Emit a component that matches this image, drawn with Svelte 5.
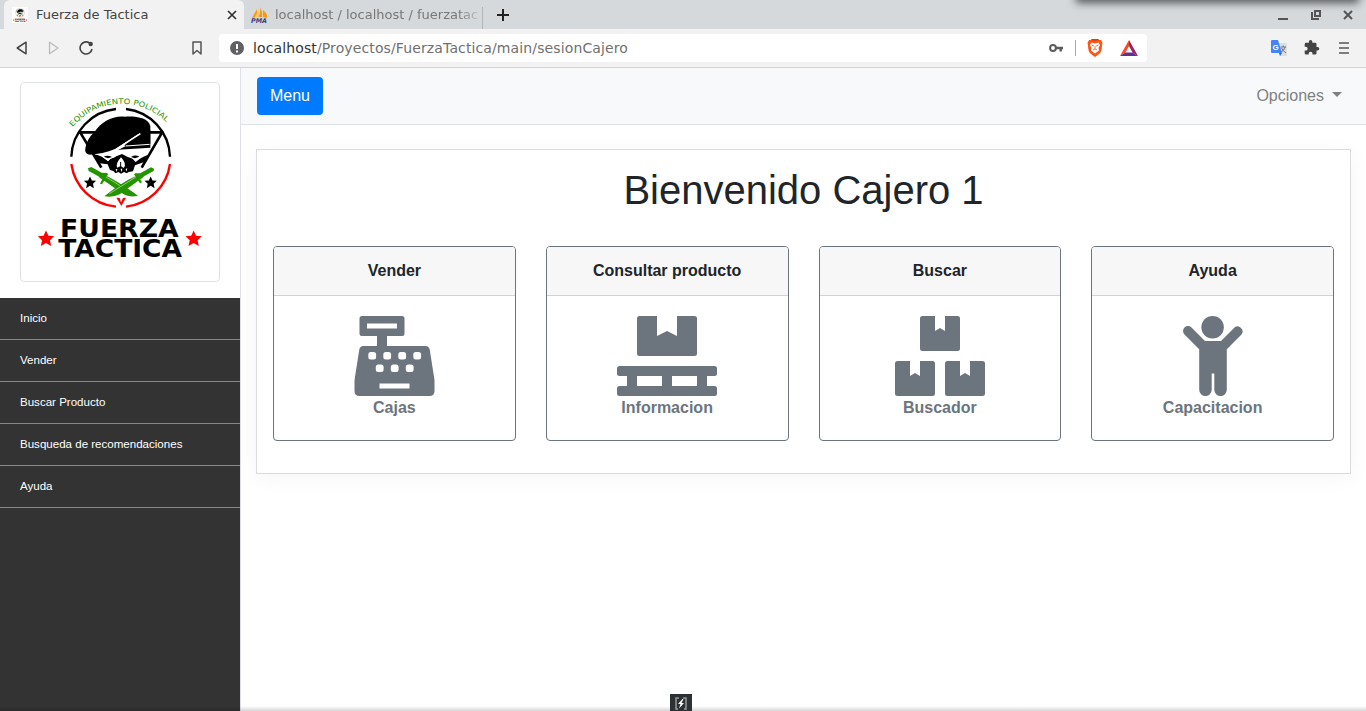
<script>
  const nav = ['Inicio', 'Vender', 'Buscar Producto', 'Busqueda de recomendaciones', 'Ayuda'];
  const cards = [
    { title: 'Vender', label: 'Cajas', icon: 'register' },
    { title: 'Consultar producto', label: 'Informacion', icon: 'pallet' },
    { title: 'Buscar', label: 'Buscador', icon: 'boxes' },
    { title: 'Ayuda', label: 'Capacitacion', icon: 'child' }
  ];
  const star = 'M0-10L3-3.6L10-3L4.8 1.9L6.3 9L0 5.2L-6.3 9L-4.8 1.9L-10-3L-3-3.6Z';
</script>

{#snippet box(x, y)}
  <path transform="translate({x} {y})" d="M2.500 0H15V15L20 12L25 15V0H37.500Q40 0 40 2.500V32.500Q40 35 37.500 35H2.500Q0 35 0 32.500V2.500Q0 0 2.500 0Z" />
{/snippet}

{#snippet logoArt()}
  <g transform="scale(.333333) translate(0 -6)">
    <path id="motto" d="M158 141A190 190 0 0 1 452 141" fill="none" />
    <text class="motto"><textPath href="#motto" textLength="316" lengthAdjust="spacingAndGlyphs">EQUIPAMIENTO POLICIAL</textPath></text>
    <g fill="none" stroke-width="7">
      <path stroke="#000" d="M154 230A149 149 0 0 1 288 87M318 87A149 149 0 0 1 450 230" />
      <path stroke="#f00" d="M154 252A149 149 0 0 0 288 380M318 380A149 149 0 0 0 450 252" />
      <path stroke="#000" stroke-width="8" d="M174 157H430M181 158L244 263M426 158L365 263" />
    </g>
    <path d="M196 205Q200 177 224 155C244 126 277 106 315 110C351 108 385 114 391 138V203L294 209L391 164L360 159L287 206C260 218 234 222 209 224Q193 223 196 205Z" />
    <path d="M362 158L391 150V192L308 198Z" />
    <path stroke="#fff" stroke-width="5" fill="none" d="M278 215L361 161" />
    <path stroke="#fff" stroke-width="3" fill="none" d="M318 198L389 193" />
    <path fill="#fff" d="M290 207L318 190L313 199L298 208Z" />
    <path d="M220 223Q246 226 264 244L271 236Q283 234 289 229L306 222L322 230L338 236L347 246Q365 229 388 224L371 247L345 256L339 274L326 276L320 280L312 276L303 281L295 276L287 280L280 273L270 270L263 253L237 250Z" />
    <path fill="#fff" d="M248 232Q264 222 280 232L270 238L264 243ZM331 232Q346 221 361 232L347 244L340 237Z" />
    <path d="M251 230Q264 224 276 231L264 235ZM333 231Q346 223 358 230L345 235Z" />
    <path fill="#fff" d="M303 232Q285 253 292 263L302 258L311 264Q322 252 303 232ZM287 267L290 276L292 267ZM302 266L304 277L307 266ZM317 267L319 275L322 265Z" />
    <path stroke="#000" stroke-width="3" d="M302 246V260" />
    <g fill="#249400">
      <path d="M204 265L214 261L245 278L261 279L257 286L281 299Q325 325 354 347Q328 353 311 343L245 297L240 294L235 289L206 273ZM257 278L265 282L246 313L240 311Z" />
      <path d="M402 266L393 262L361 280L345 280L350 287L325 299Q281 325 253 349Q279 353 299 343L361 298L367 294L372 289L401 273ZM348 279L342 283L360 310L366 307Z" />
    </g>
    <path stroke="#fff" stroke-width="1.500" fill="none" d="M258 291L300 317M348 291L268 341" />
    <path d={star} transform="translate(210 308) scale(1.85)" />
    <path d={star} transform="translate(392 308) scale(1.85)" />
    <path fill="#f00" d="M289 353L299 354L303 367L309 354L318 353L304 378Z" />
    <path fill="#f00" d={star} transform="translate(78 476) scale(2.45)" />
    <path fill="#f00" d={star} transform="translate(521 476) scale(2.45)" />
    <text class="brand" x="120" y="470" textLength="356" lengthAdjust="spacingAndGlyphs">FUERZA</text>
    <text class="brand" x="115" y="532" textLength="371" lengthAdjust="spacingAndGlyphs">TACTICA</text>
  </g>
{/snippet}

<div class="window">
  <header class="tabs">
    <div class="tab active">
      <svg class="fav" viewBox="18 8 164 182" width="16" height="16"><rect x="0" y="0" width="200" height="200" fill="#fff" />{@render logoArt()}</svg>
      <span>Fuerza de Tactica</span>
      <svg class="close" width="10" height="10" viewBox="0 0 10 10"><path d="M1 1L9 9M9 1L1 9" stroke="#333" stroke-width="1.7" /></svg>
    </div>
    <div class="tab second">
      <svg width="17" height="16" viewBox="0 0 17 16"><path fill="#f89c0e" d="M6 2L6 10L1 11ZM9 0Q12 5 11 10L7 10Q10 6 9 0ZM12 3Q17 7 16 11L12 10Z" /><path fill="#fdc471" d="M8 2V10L4 10Z" /><text x="0" y="15.500" class="pma" textLength="16" lengthAdjust="spacingAndGlyphs">PMA</text></svg>
      <span class="fade">localhost / localhost / fuerzatac</span>
    </div>
    <svg class="plus" width="12" height="12" viewBox="0 0 12 12"><path d="M6 0V12M0 6H12" stroke="#222" stroke-width="2" /></svg>
    <div class="controls">
      <svg width="10" height="12" viewBox="0 0 10 12"><path d="M0 10H10" stroke="#555" stroke-width="2" /></svg>
      <svg width="10" height="12" viewBox="0 0 10 12"><path d="M4 2H9V7H4ZM1 3V10H8" fill="none" stroke="#555" stroke-width="2" /></svg>
      <svg width="10" height="12" viewBox="0 0 10 12"><path d="M1 2L9 10M9 2L1 10" stroke="#555" stroke-width="2" /></svg>
    </div>
  </header>

  <div class="toolbar">
    <svg class="back" width="12" height="14" viewBox="0 0 12 14"><path d="M10 1.200V12.800L1.200 7Z" fill="none" stroke="#444" stroke-width="1.500" stroke-linejoin="round" /></svg>
    <svg class="forward" width="12" height="14" viewBox="0 0 12 14"><path d="M1.500 1.200V12.800L10 7Z" fill="none" stroke="#bbb" stroke-width="1.300" stroke-linejoin="round" /></svg>
    <svg class="reload" width="14" height="14" viewBox="0 0 14 14"><path d="M10.500 2A6 6 0 1 0 13 8" fill="none" stroke="#444" stroke-width="1.600" /><circle cx="11.700" cy="3" r="2.200" fill="#444" /></svg>
    <svg class="bookmark" width="10" height="14" viewBox="0 0 10 14"><path d="M1 1H9V13L5 9.500L1 13Z" fill="none" stroke="#555" stroke-width="1.500" stroke-linejoin="round" /></svg>
    <div class="address">
      <svg width="14" height="14" viewBox="0 0 14 14"><circle cx="7" cy="7" r="7" fill="#5f6165" /><path d="M7 3V8M7 9.500V11.500" stroke="#fff" stroke-width="2" /></svg>
      <span class="url"><b>localhost</b>/Proyectos/FuerzaTactica/main/sesionCajero</span>
      <svg class="key" width="14" height="9" viewBox="0 0 14 9"><circle cx="4" cy="4" r="2.900" fill="none" stroke="#5a5c60" stroke-width="2" /><path d="M7 4H14M11.700 4V7.500" stroke="#5a5c60" stroke-width="2.400" /></svg>
      <i class="divider"></i>
      <svg class="lion" width="16" height="18" viewBox="0 0 16 18"><path fill="#fb5413" d="M4 1L5 0H11L12 1L14 1L15.500 4L15 6Q15 13 12 15L8 18L4 15Q1 13 1 6L.5 4L2 1Z" /><path fill="#e23f08" d="M4 1L5 0H11L12 1L8 2Z" /><path fill="#fff" d="M4.500 3.500L8 4.500L11.500 3.500L13 6L11.500 9L12 11.500L8 14.500L4 11.500L4.500 9L3 6Z" /><path d="M4.500 6L7 7M11.500 6L9 7M8 7V10M6 11L8 10L10 11" stroke="#fb5413" stroke-width=".8" fill="none" /></svg>
      <svg class="bat" width="18" height="16" viewBox="0 0 18 16"><path fill="#ff4724" d="M9 0L0 16L5.500 12.500L9 6Z" /><path fill="#9e1f63" d="M9 0L18 16L12.500 12.500L9 6Z" /><path fill="#662d91" d="M0 16H18L12.500 12.500H5.500Z" /></svg>
    </div>
    <svg class="translate" width="16" height="16" viewBox="0 0 16 16"><path fill="#dedede" d="M7 3H15Q16 3 16 4V16H9Z" /><path fill="#4386f3" d="M1 0H7L11 13H1Q0 13 0 12V1Q0 0 1 0Z" /><path fill="#3367d6" d="M8 13H11L9 16Z" /><text x="1.500" y="9.500" class="g">G</text><path d="M9.500 7H15M12.200 5.500V7M14 7Q13 11 10 12M10.500 8Q12 11 15 13" stroke="#607988" fill="none" /></svg>
    <svg class="puzzle" width="16" height="16" viewBox="1 1 23 23"><path fill="#444" d="M20.500 11H19V7a2 2 0 0 0-2-2h-4V3.500a2.500 2.500 0 0 0-5 0V5H4a2 2 0 0 0-2 2v3.800h1.500a2.700 2.700 0 0 1 0 5.400H2V20a2 2 0 0 0 2 2h3.800v-1.500a2.700 2.700 0 0 1 5.400 0V22H17a2 2 0 0 0 2-2v-4h1.500a2.500 2.500 0 0 0 0-5Z" /></svg>
    <svg class="menu" width="10" height="12" viewBox="0 0 10 12"><path d="M0 1H10M0 6H10M0 11H10" stroke="#555" stroke-width="1.700" /></svg>
  </div>

  <div class="page">
    <aside>
      <div class="logo-wrap">
        <div class="logo"><svg width="200" height="200" viewBox="0 0 200 200">{@render logoArt()}</svg></div>
      </div>
      <nav>
        {#each nav as item}<a href="#top">{item}</a>{/each}
      </nav>
    </aside>
    <main>
      <div class="navbar">
        <button>Menu</button>
        <span class="options">Opciones</span>
      </div>
      <section class="panel">
        <h1>Bienvenido Cajero 1</h1>
        <div class="cards">
          {#each cards as card}
            <article>
              <h2>{card.title}</h2>
              <div class="body">
                {#if card.icon === 'register'}
                  <svg class="register" width="80" height="80" viewBox="-.5 0 80 80">
                    <path fill-rule="evenodd" d="M7.500 0H47.500Q50 0 50 2.500V17.500Q50 20 47.500 20H32.500V30H71Q74.500 30 75.200 33.500L79.700 62Q80 64 80 66V75Q80 80 75 80H5Q0 80 0 75V66Q0 64 .3 62L4.800 33.500Q5.500 30 9 30H22.500V20H7.500Q5 20 5 17.500V2.500Q5 0 7.500 0ZM12.500 7.500V12.500H42.500V7.500ZM25 67.500V72.500H55V67.500Z" />
                    <g fill="#fff">
                      {#each [13.8, 28.8, 43.8, 58.8] as x}<rect {x} y="36" width="7.800" height="7.500" rx="2.500" />{/each}
                      {#each [21.3, 36.3, 51.3] as x}<rect {x} y="48.500" width="7.800" height="7.500" rx="2.500" />{/each}
                    </g>
                  </svg>
                {:else if card.icon === 'pallet'}
                  <svg width="100" height="80" viewBox="0 0 100 80">
                    <path d="M22.500 0H40V20L50 15L60 20V0H77.500Q80 0 80 2.500V37.500Q80 40 77.500 40H22.500Q20 40 20 37.500V2.500Q20 0 22.500 0Z" />
                    <path fill-rule="evenodd" d="M2.500 50H97.500Q100 50 100 52.500V57.500Q100 60 97.500 60H90V70H97.500Q100 70 100 72.500V77.500Q100 80 97.500 80H2.500Q0 80 0 77.500V72.500Q0 70 2.500 70H10V60H2.500Q0 60 0 57.500V52.500Q0 50 2.500 50ZM20 60V70H45V60ZM55 60V70H80V60Z" />
                  </svg>
                {:else if card.icon === 'boxes'}
                  <svg width="90" height="80" viewBox="0 0 90 80">{@render box(25, 0)}{@render box(0, 45)}{@render box(50, 45)}</svg>
                {:else}
                  <svg width="60" height="80" viewBox="0 0 60 80">
                    <circle cx="29.600" cy="11.250" r="11.250" />
                    <path d="M1.500 11.500A5 5 0 0 1 8.500 11.500L22 25H38L51.500 11.500A5 5 0 0 1 58.500 18.500L43.800 33.300V73.800A6.250 6.250 0 0 1 31.300 73.800V57.500H28.700V73.800A6.250 6.250 0 0 1 16.200 73.800V33.300L1.500 18.500A5 5 0 0 1 1.500 11.500Z" />
                  </svg>
                {/if}
                <strong>{card.label}</strong>
              </div>
            </article>
          {/each}
        </div>
      </section>
    </main>
  </div>

  <div class="top-shadow"></div>
  <div class="bottom-shadow"></div>
  <div class="dock">
    <svg width="12" height="13" viewBox="0 0 12 13"><path d="M4 1H1V12H3M8 1H11V12H9" fill="none" stroke="#999" stroke-width="1.500" /><path fill="#fff" d="M7.500 2L3 7H5.500L4 11.500L9 6H6.500L8.500 2Z" /></svg>
  </div>
</div>

<style>
  :global(body) { overflow: hidden; }
  * { box-sizing: border-box; }
  svg { display: block; flex: none; }
  .window { position: relative; width: 1366px; height: 711px; overflow: hidden; display: flex; flex-direction: column; background: #fff; font: 16px/24px "Liberation Sans", Arial, sans-serif; color: #212529; }
  .tabs { height: 29px; flex: none; display: flex; align-items: center; background: #d5d9dc; padding-left: 4px; font: 13px/29px "DejaVu Sans", sans-serif; }
  .tab { height: 29px; display: flex; align-items: center; gap: 8px; white-space: nowrap; }
  .active { width: 240px; padding: 0 7px 0 8px; border-radius: 6px 6px 0 0; background: #f2f2f2; color: #444; }
  .close { margin-left: auto; }
  .second { width: 239px; padding-left: 7px; gap: 7px; color: #777; }
  .second::after { content: ""; flex: none; width: 1px; height: 22px; align-self: flex-end; background: #b3b7ba; margin-left: auto; }
  .fade { flex: none; width: 206px; margin-right: -6px; mask-image: linear-gradient(90deg, #000 89%, transparent 101%); }
  .plus { margin-left: 14px; }
  .controls { display: flex; gap: 22.500px; margin: 1px 13px 0 auto; }
  .pma { font: italic bold 6.500px "DejaVu Sans", sans-serif; fill: #3f407c; }
  .toolbar { height: 39px; flex: none; display: flex; align-items: center; background: #f2f2f2; border-bottom: 1px solid #d2d5d7; padding-left: 16px; }
  .forward { margin-left: 20px; }
  .reload { margin-left: 19px; }
  .bookmark { margin-left: 99px; }
  .address { width: 928px; height: 28px; margin-left: 17px; padding: 0 9px 0 11px; display: flex; align-items: center; background: #fff; border-radius: 4px; }
  .url { margin-left: 9px; font: 14px/28px "DejaVu Sans", sans-serif; letter-spacing: .12px; color: #707070; }
  .url b { font-weight: normal; color: #333; }
  .key { margin-left: auto; }
  .divider { width: 1px; height: 16px; background: #aaa; margin: 0 11px 0 12px; }
  .bat { margin-left: 17px; }
  .translate { margin-left: 124px; }
  .g { font: bold 8px "Liberation Sans", sans-serif; fill: #fff; }
  .puzzle { margin-left: 17px; }
  .menu { margin-left: 19px; }
  .page { flex: 1; display: flex; }
  aside { width: 240px; background: #333; }
  .logo-wrap { height: 230px; padding: 14px 20px; background: #fff; }
  .logo { width: 200px; height: 200px; border: 1px solid #dee2e6; border-radius: 4px; }
  .logo svg { margin: -1px; }
  .motto { font: 22px "DejaVu Sans", sans-serif; fill: #249400; }
  .brand { font: bold 74px "DejaVu Sans", sans-serif; fill: #000; }
  nav { display: flex; flex-direction: column; }
  nav a { height: 42px; padding-left: 20px; border-bottom: 1px solid #888; color: #fff; text-decoration: none; font-size: 11.550px; line-height: 41px; }
  main { flex: 1; border-left: 1px solid #dee2e6; }
  .navbar { height: 57px; display: flex; align-items: center; justify-content: space-between; padding: 0 24px 0 16px; background: #f8f9fb; border-bottom: 1px solid #dee2e6; }
  button { height: 38px; width: 66px; padding: 0; border: 0; border-radius: 4px; background: #007bff; color: #fff; font: inherit; }
  .options { display: flex; align-items: center; color: #808080; gap: 8px; }
  .options::after { content: ""; border: 5px solid transparent; border-top-color: #808080; border-bottom: 0; margin-top: -3px; }
  .panel { margin: 24px 15px 0; height: 325px; padding: 16px; border: 1px solid #d9dbdd; box-shadow: 0 4px 20px rgba(0, 0, 0, .045); }
  h1 { margin: 0 0 32px; font-size: 40px; line-height: 48px; font-weight: normal; text-align: center; }
  .cards { display: grid; grid-template-columns: repeat(4, 1fr); gap: 30px; }
  article { height: 195px; border: 1px solid #6c757d; border-radius: 4px; overflow: hidden; }
  h2 { margin: 0; height: 49px; border-bottom: 1px solid #cfd1d3; background: #f7f7f7; font-size: 16px; line-height: 48px; text-align: center; }
  .body { display: flex; flex-direction: column; align-items: center; padding-top: 20px; color: #6c757d; fill: #6c757d; }
  .register { overflow: visible; }
  .top-shadow { position: absolute; left: 1080px; top: -12px; width: 275px; height: 10px; box-shadow: 0 1px 9px 4px rgba(0, 0, 0, .6); }
  .bottom-shadow { position: absolute; left: 0; right: 0; bottom: 0; height: 5px; background: linear-gradient(transparent, rgba(0, 0, 0, .16)); }
  .dock { position: absolute; left: 670px; top: 694px; width: 22px; height: 17px; display: flex; justify-content: center; padding-top: 3px; background: #2c3133; }
</style>
